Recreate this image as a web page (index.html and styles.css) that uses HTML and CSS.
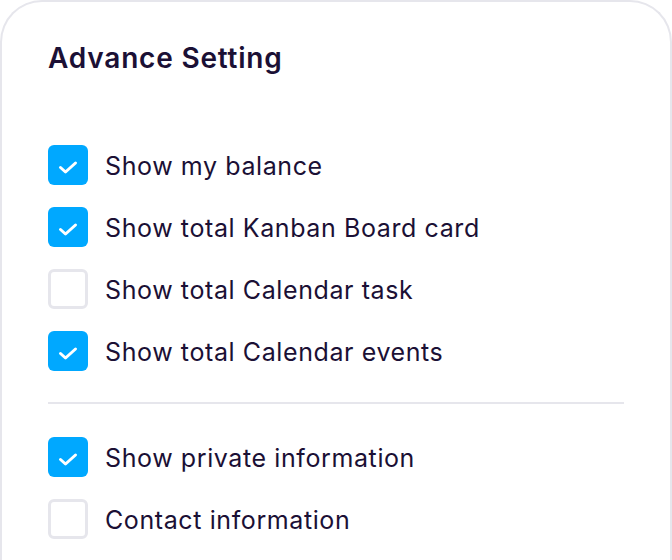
FILE: index.html
```html
<!DOCTYPE html>
<html>
<head>
<meta charset="utf-8">
<link rel="stylesheet" href="styles.css">
</head>
<body>
<div class="card">
  <h2 class="title">Advance Setting</h2>
  <ul class="options">
    <li class="option"><span class="box checked"><svg viewBox="0 0 40 40"><polyline points="12.5,22.5 17.5,27 27.5,18"/></svg></span><span class="label">Show my balance</span></li>
    <li class="option"><span class="box checked"><svg viewBox="0 0 40 40"><polyline points="12.5,22.5 17.5,27 27.5,18"/></svg></span><span class="label">Show total Kanban Board card</span></li>
    <li class="option"><span class="box"></span><span class="label">Show total Calendar task</span></li>
    <li class="option"><span class="box checked"><svg viewBox="0 0 40 40"><polyline points="12.5,22.5 17.5,27 27.5,18"/></svg></span><span class="label">Show total Calendar events</span></li>
  </ul>
  <hr class="divider">
  <ul class="options">
    <li class="option"><span class="box checked"><svg viewBox="0 0 40 40"><polyline points="12.5,22.5 17.5,27 27.5,18"/></svg></span><span class="label">Show private information</span></li>
    <li class="option"><span class="box"></span><span class="label">Contact information</span></li>
  </ul>
</div>
</body>
</html>
```
FILE: styles.css
```css
html, body {
  margin: 0;
  padding: 0;
  background: #ffffff;
  overflow: hidden;
}
body {
  font-family: "Inter", "Open Sans", sans-serif;
  color: #1b1035;
}
.card {
  box-sizing: border-box;
  width: 672px;
  height: 560px;
  border: 2px solid #e6e6ec;
  border-bottom: none;
  border-radius: 42px 42px 0 0;
  padding: 36px 46px 0 46px;
  background: #fff;
}
.title {
  margin: 0;
  font-size: 28px;
  line-height: 40px;
  font-weight: 600;
  color: #1b1035;
  letter-spacing: 0.8px;
}
.options {
  list-style: none;
  margin: 0;
  padding: 0;
  display: flex;
  flex-direction: column;
  gap: 22px;
}
.title + .options {
  margin-top: 67px;
}
.option {
  display: flex;
  align-items: center;
  gap: 17px;
  height: 40px;
}
.box {
  box-sizing: border-box;
  width: 40px;
  height: 40px;
  flex: none;
  border-radius: 6px;
  border: 3px solid #e6e6ec;
  background: #fff;
  display: flex;
}
.box.checked {
  border: none;
  background: #00a8ff;
}
.box svg {
  width: 40px;
  height: 40px;
}
.box polyline {
  fill: none;
  stroke: #fff;
  stroke-width: 3;
  stroke-linecap: round;
  stroke-linejoin: round;
}
.label {
  font-size: 25px;
  line-height: 30px;
  letter-spacing: 0.6px;
  color: #1b1035;
  padding-top: 2px;
}
.divider {
  border: none;
  height: 2px;
  background: #e6e6ec;
  margin: 31px 0 33px 0;
}
```
